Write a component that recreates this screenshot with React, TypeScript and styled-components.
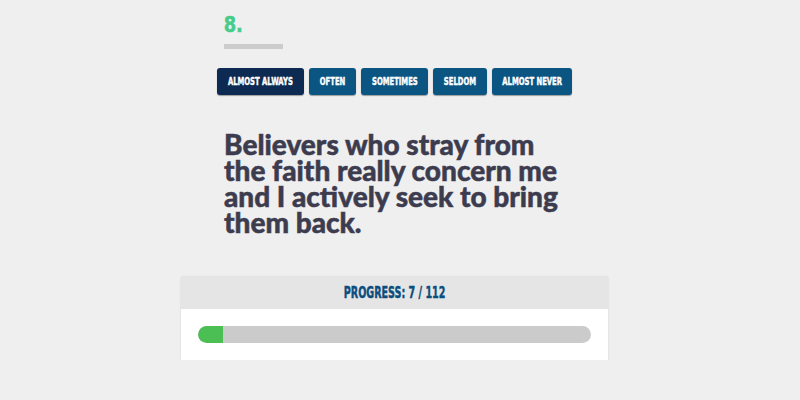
import { FC } from "react";
import styled, { createGlobalStyle } from "styled-components";

const GlobalStyle = createGlobalStyle`
  body {
    margin: 0;
    background: #efefef;
    font-family: "Lato", "Liberation Sans", sans-serif;
  }
`;

const answers = [
  { label: "ALMOST ALWAYS", width: 87, active: true },
  { label: "OFTEN", width: 47 },
  { label: "SOMETIMES", width: 67 },
  { label: "SELDOM", width: 54 },
  { label: "ALMOST NEVER", width: 80 },
];

const App: FC = () => {
  const done = 7;
  const total = 112;
  return (
    <Page>
      <GlobalStyle />
      <Question>
        <Number>
          <Condensed squeeze={0.85}>8.</Condensed>
        </Number>
        <Rule />
        <Answers>
          {answers.map((a) => (
            <Answer key={a.label} active={a.active} w={a.width}>
              <Condensed squeeze={0.62}>{a.label}</Condensed>
            </Answer>
          ))}
        </Answers>
        <Statement>
          Believers who stray from the faith really concern me and I actively
          seek to bring them back.
        </Statement>
      </Question>
      <Card>
        <CardHead>
          <Condensed squeeze={0.58}>
            PROGRESS: {done} / {total}
          </Condensed>
        </CardHead>
        <CardBody>
          <Track>
            <Fill style={{ width: `${Math.max(6.4, (done / total) * 100)}%` }} />
          </Track>
        </CardBody>
      </Card>
    </Page>
  );
};

const Page = styled.div`
  padding: 12px 0 0 181px;
`;

const Condensed = styled.span<{ squeeze: number }>`
  display: inline-block;
  font-family: "DejaVu Sans", "Liberation Sans", sans-serif;
  font-weight: bold;
  transform: scaleX(${({ squeeze }) => squeeze});
  -webkit-text-stroke: 0.5px currentColor;
  white-space: nowrap;
`;

const Question = styled.div`
  padding-left: 43px;
`;

const Number = styled.div`
  color: #47cc8a;
  font-size: 21px;
  line-height: 24px;
  height: 24px;
  margin-left: -2px;
`;

const Rule = styled.div`
  width: 59px;
  height: 5px;
  background: #cccccc;
  margin-top: 8px;
`;

const Answers = styled.div`
  display: flex;
  gap: 5px;
  margin: 19px 0 0 -7px;
`;

const Answer = styled.div<{ active?: boolean; w: number }>`
  width: ${({ w }) => w}px;
  height: 27px;
  box-sizing: border-box;
  border-radius: 3px;
  background: ${({ active }) => (active ? "#0d2a52" : "#0b5583")};
  box-shadow: 0 1px 1px rgba(0, 0, 0, 0.35);
  color: #ffffff;
  font-size: 11px;
  display: flex;
  align-items: center;
  justify-content: center;
`;

const Statement = styled.h1`
  margin: 36px 0 0;
  max-width: 350px;
  color: #3d3c4f;
  font-family: "Lato", "Liberation Sans", sans-serif;
  font-weight: 900;
  font-size: 28px;
  line-height: 26px;
  -webkit-text-stroke: 0.5px #3d3c4f;
`;

const Card = styled.div`
  width: 427px;
  margin-top: 41px;
  background: #ffffff;
  box-shadow: 0 1px 2px rgba(0, 0, 0, 0.12);
`;

const CardHead = styled.div`
  height: 33px;
  background: #e5e5e5;
  color: #0b4d7e;
  font-size: 16.5px;
  display: flex;
  align-items: center;
  justify-content: center;
`;

const CardBody = styled.div`
  padding: 17px;
`;

const Track = styled.div`
  height: 17px;
  border-radius: 9px;
  background: #cbcbcb;
  overflow: hidden;
`;

const Fill = styled.div`
  height: 100%;
  background: #4bbe54;
  border-radius: 9px 0 0 9px;
`;

export default App;
